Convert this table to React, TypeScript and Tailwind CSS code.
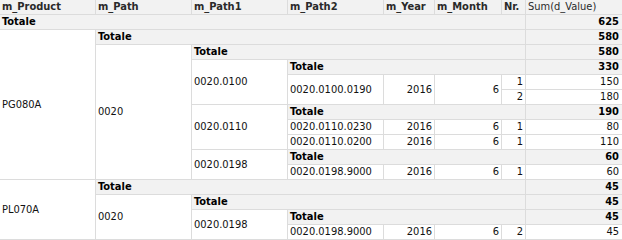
import React from "react";

type P = { children?: React.ReactNode; cls?: string };

const base =
  "flex items-center whitespace-nowrap overflow-hidden border-b border-[#dcdcdc] leading-[14px]";

const H = ({ children, cls = "" }: P) => (
  <div className={`${base} bg-[#f2f2f2] border-r pl-[2px] font-bold text-[#2a2a2a] ${cls}`}>{children}</div>
);

const T = ({ cls = "" }: P) => (
  <div className={`${base} bg-[#f2f2f2] border-r pl-[2px] font-bold text-black ${cls}`}>Totale</div>
);

const TV = ({ children }: P) => (
  <div className={`${base} bg-[#f2f2f2] justify-end pr-[3px] font-bold text-black`}>{children}</div>
);

const L = ({ children, cls = "" }: P) => (
  <div className={`${base} bg-white border-r pl-[2px] text-[#111] ${cls}`}>{children}</div>
);

const N = ({ children, cls = "" }: P) => (
  <div className={`${base} bg-white border-r justify-end pr-[2px] text-[#111] ${cls}`}>{children}</div>
);

const V = ({ children }: P) => (
  <div className={`${base} bg-white justify-end pr-[3px] text-[#111]`}>{children}</div>
);

export default function App() {
  return (
    <div className="w-[622px] h-[240px] overflow-hidden bg-white font-['DejaVu_Sans_Condensed','DejaVu_Sans',sans-serif] text-[11px]">
      <div className="grid grid-cols-[96px_96px_96px_96px_51px_67px_24px_96px] auto-rows-[15px]">
        {/* header */}
        <H>m_Product</H>
        <H>m_Path</H>
        <H>m_Path1</H>
        <H>m_Path2</H>
        <H>m_Year</H>
        <H>m_Month</H>
        <H>Nr.</H>
        <div className={`${base} bg-[#f2f2f2] pl-[2px] text-[#2a2a2a]`}>Sum(d_Value)</div>

        {/* row 2 */}
        <T cls="col-span-7" />
        <TV>625</TV>

        {/* row 3 */}
        <L cls="row-span-10">PG080A</L>
        <T cls="col-span-6" />
        <TV>580</TV>

        {/* row 4 */}
        <L cls="row-span-9">0020</L>
        <T cls="col-span-5" />
        <TV>580</TV>

        {/* row 5 */}
        <L cls="row-span-3">0020.0100</L>
        <T cls="col-span-4" />
        <TV>330</TV>

        {/* row 6 */}
        <L cls="row-span-2">0020.0100.0190</L>
        <N cls="row-span-2">2016</N>
        <N cls="row-span-2">6</N>
        <N>1</N>
        <V>150</V>

        {/* row 7 */}
        <N>2</N>
        <V>180</V>

        {/* row 8 */}
        <L cls="row-span-3">0020.0110</L>
        <T cls="col-span-4" />
        <TV>190</TV>

        {/* row 9 */}
        <L>0020.0110.0230</L>
        <N>2016</N>
        <N>6</N>
        <N>1</N>
        <V>80</V>

        {/* row 10 */}
        <L>0020.0110.0200</L>
        <N>2016</N>
        <N>6</N>
        <N>1</N>
        <V>110</V>

        {/* row 11 */}
        <L cls="row-span-2">0020.0198</L>
        <T cls="col-span-4" />
        <TV>60</TV>

        {/* row 12 */}
        <L>0020.0198.9000</L>
        <N>2016</N>
        <N>6</N>
        <N>1</N>
        <V>60</V>

        {/* row 13 */}
        <L cls="row-span-4">PL070A</L>
        <T cls="col-span-6" />
        <TV>45</TV>

        {/* row 14 */}
        <L cls="row-span-3">0020</L>
        <T cls="col-span-5" />
        <TV>45</TV>

        {/* row 15 */}
        <L cls="row-span-2">0020.0198</L>
        <T cls="col-span-4" />
        <TV>45</TV>

        {/* row 16 */}
        <L>0020.0198.9000</L>
        <N>2016</N>
        <N>6</N>
        <N>2</N>
        <V>45</V>
      </div>
    </div>
  );
}
